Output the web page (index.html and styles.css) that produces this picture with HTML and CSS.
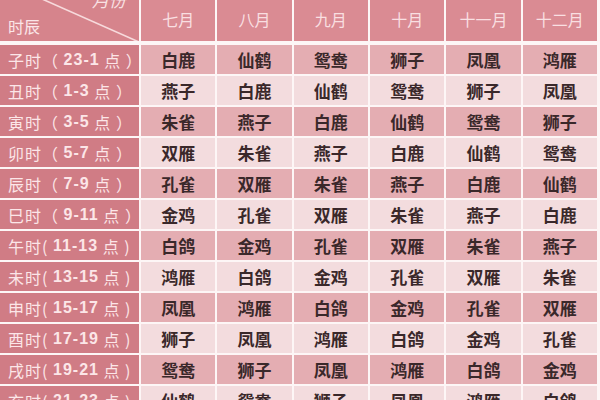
FILE: index.html
```html
<!DOCTYPE html>
<html lang="zh">
<head>
<meta charset="utf-8">
<link rel="stylesheet" href="styles.css">
</head>
<body>
<div class="table">
  <div class="head">
    <div class="corner">
      <svg class="diag" width="139" height="41" viewBox="0 0 139 41"><line x1="42" y1="-1" x2="139" y2="42" stroke="#f7dadc" stroke-width="1.6"/></svg>
      <span class="corner-top">月份</span>
      <span class="corner-bottom">时辰</span>
    </div>
    <div class="month">七月</div>
    <div class="month">八月</div>
    <div class="month">九月</div>
    <div class="month">十月</div>
    <div class="month">十一月</div>
    <div class="month">十二月</div>
  </div>
  <div class="body">
    <div class="hour">子时（ <b>23-1</b> 点 ）</div>
    <div class="cell dark">白鹿</div><div class="cell dark">仙鹤</div><div class="cell dark">鸳鸯</div><div class="cell dark">狮子</div><div class="cell dark">凤凰</div><div class="cell dark">鸿雁</div>

    <div class="hour">丑时（ <b>1-3</b> 点 ）</div>
    <div class="cell">燕子</div><div class="cell">白鹿</div><div class="cell">仙鹤</div><div class="cell">鸳鸯</div><div class="cell">狮子</div><div class="cell">凤凰</div>

    <div class="hour">寅时（ <b>3-5</b> 点 ）</div>
    <div class="cell dark">朱雀</div><div class="cell dark">燕子</div><div class="cell dark">白鹿</div><div class="cell dark">仙鹤</div><div class="cell dark">鸳鸯</div><div class="cell dark">狮子</div>

    <div class="hour">卯时（ <b>5-7</b> 点 ）</div>
    <div class="cell">双雁</div><div class="cell">朱雀</div><div class="cell">燕子</div><div class="cell">白鹿</div><div class="cell">仙鹤</div><div class="cell">鸳鸯</div>

    <div class="hour">辰时（ <b>7-9</b> 点 ）</div>
    <div class="cell dark">孔雀</div><div class="cell dark">双雁</div><div class="cell dark">朱雀</div><div class="cell dark">燕子</div><div class="cell dark">白鹿</div><div class="cell dark">仙鹤</div>

    <div class="hour">巳时（ <b>9-11</b> 点 ）</div>
    <div class="cell">金鸡</div><div class="cell">孔雀</div><div class="cell">双雁</div><div class="cell">朱雀</div><div class="cell">燕子</div><div class="cell">白鹿</div>

    <div class="hour">午时( <b>11-13</b> 点 )</div>
    <div class="cell dark">白鸽</div><div class="cell dark">金鸡</div><div class="cell dark">孔雀</div><div class="cell dark">双雁</div><div class="cell dark">朱雀</div><div class="cell dark">燕子</div>

    <div class="hour">未时( <b>13-15</b> 点 )</div>
    <div class="cell">鸿雁</div><div class="cell">白鸽</div><div class="cell">金鸡</div><div class="cell">孔雀</div><div class="cell">双雁</div><div class="cell">朱雀</div>

    <div class="hour">申时( <b>15-17</b> 点 )</div>
    <div class="cell dark">凤凰</div><div class="cell dark">鸿雁</div><div class="cell dark">白鸽</div><div class="cell dark">金鸡</div><div class="cell dark">孔雀</div><div class="cell dark">双雁</div>

    <div class="hour">酉时( <b>17-19</b> 点 )</div>
    <div class="cell">狮子</div><div class="cell">凤凰</div><div class="cell">鸿雁</div><div class="cell">白鸽</div><div class="cell">金鸡</div><div class="cell">孔雀</div>

    <div class="hour">戌时( <b>19-21</b> 点 )</div>
    <div class="cell dark">鸳鸯</div><div class="cell dark">狮子</div><div class="cell dark">凤凰</div><div class="cell dark">鸿雁</div><div class="cell dark">白鸽</div><div class="cell dark">金鸡</div>

    <div class="hour">亥时( <b>21-23</b> 点 )</div>
    <div class="cell">仙鹤</div><div class="cell">鸳鸯</div><div class="cell">狮子</div><div class="cell">凤凰</div><div class="cell">鸿雁</div><div class="cell">白鸽</div>
  </div>
</div>
</body>
</html>
```
FILE: styles.css
```css
html, body {
  margin: 0;
  padding: 0;
  background: #fdf6f6;
  overflow: hidden;
}
body {
  width: 600px;
  height: 400px;
  font-family: "Noto Sans CJK SC", "Noto Sans", sans-serif;
}
.table {
  width: 597px;
  display: flex;
  flex-direction: column;
  gap: 4px;
}
.head, .body {
  display: grid;
  grid-template-columns: 139px repeat(6, 1fr);
  column-gap: 2px;
}
.head {
  grid-template-rows: 41px;
}
.body {
  grid-template-rows: repeat(12, 29px);
  row-gap: 2px;
}
.corner {
  position: relative;
  background: #d6848c;
  overflow: hidden;
}
.diag {
  position: absolute;
  left: 0;
  top: 0;
}
.corner-top {
  position: absolute;
  top: -13px;
  left: 92px;
  font-size: 17px;
  font-style: italic;
  color: #f9e1e3;
}
.corner-bottom {
  position: absolute;
  left: 8px;
  bottom: 3px;
  font-size: 16px;
  color: #fbe6e8;
}
.month {
  background: #da8b93;
  color: #f9dfe1;
  font-size: 16px;
  display: flex;
  align-items: center;
  justify-content: center;
  padding-bottom: 4px;
}
.hour {
  background: #d07c85;
  color: #fce6e8;
  font-size: 16px;
  letter-spacing: 1px;
  display: flex;
  align-items: center;
  padding-left: 8px;
  white-space: pre;
}
.hour b {
  font-weight: 700;
  font-family: "Liberation Sans", "Noto Sans CJK SC", sans-serif;
}
.cell {
  background: #f3dcde;
  color: #3a282a;
  font-size: 17px;
  font-weight: 700;
  display: flex;
  align-items: center;
  justify-content: center;
}
.cell.dark {
  background: #e4adb2;
}
```
